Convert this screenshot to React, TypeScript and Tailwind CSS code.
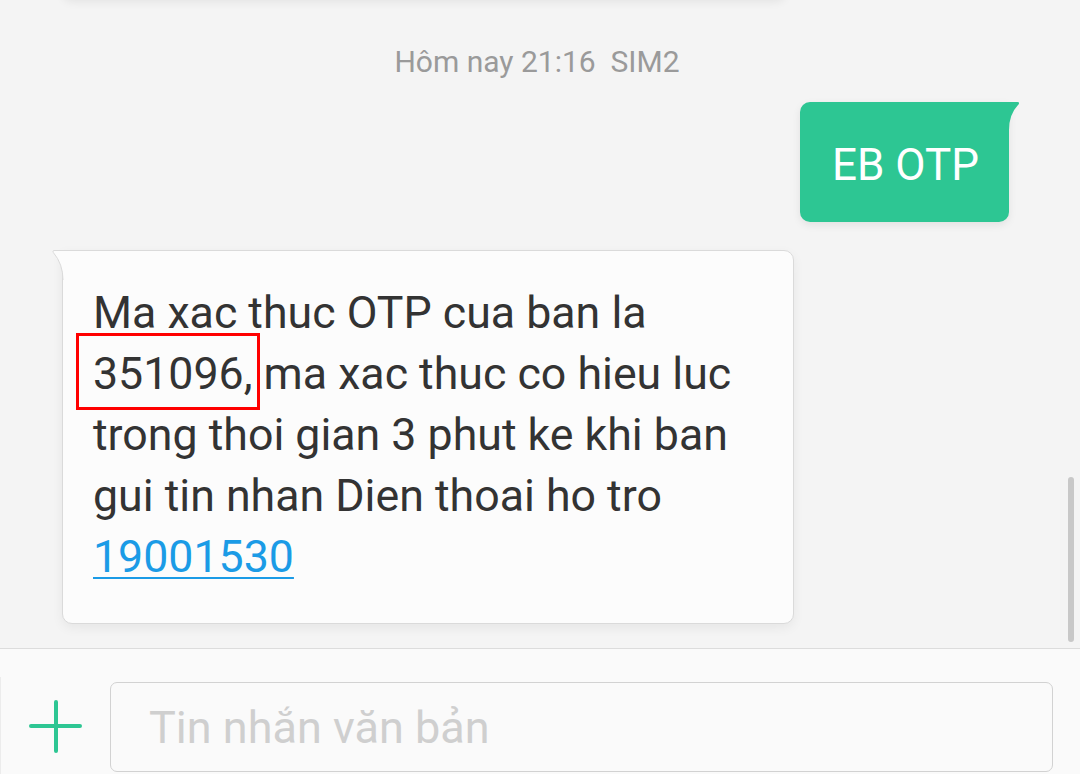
import React from 'react'

const GREEN = '#2dc693'

const lines = [
  'Ma xac thuc OTP cua ban la',
  '351096, ma xac thuc co hieu luc',
  'trong thoi gian 3 phut ke khi ban',
  'gui tin nhan Dien thoai ho tro',
]

function IncomingTail() {
  return (
    <svg className="absolute left-[-11px] top-[-1px]" width="12" height="30" viewBox="0 0 12 30">
      <path d="M12 0 L2 0 Q-0.5 0 1 2.5 Q11 14 11 30 L12 30 Z" fill="#fcfcfc" />
      <path d="M12 0.5 L2 0.5 Q0 0.5 1.4 2.6 Q11 14 11 30" fill="none" stroke="#dadada" strokeWidth="1" />
    </svg>
  )
}

function OutgoingTail() {
  return (
    <svg className="absolute right-[-11px] top-0" width="12" height="28" viewBox="0 0 12 28">
      <path d="M0 0 L9.5 0 Q12 0 10.5 2.5 Q1 12 1 28 L0 28 Z" fill={GREEN} />
    </svg>
  )
}

export default function App() {
  return (
    <div className="w-[1080px] h-[774px] flex flex-col bg-[#f4f4f4] overflow-hidden relative font-['Roboto',sans-serif]">
      {/* chat area */}
      <div className="h-[648px] flex flex-col shrink-0 relative">
        {/* previous message, scrolled mostly off screen */}
        <div className="ml-[62px] w-[724px] h-[60px] -mt-[61px] bg-[#fcfcfc] border border-[#e2e2e2] rounded-[10px] shadow-[0_3px_10px_rgba(0,0,0,0.07)]" />

        <div className="mt-[45px] pr-[6px] text-center text-[30px] leading-[36px] text-[#9a9a9a] whitespace-pre">
          {'Hôm nay 21:16  SIM2'}
        </div>

        <div className="mt-[22px] self-end mr-[71px] relative">
          <div
            className="h-[120px] pl-[32px] pr-[30px] pt-[6px] flex items-center rounded-[10px] rounded-tr-none text-white text-[44px] leading-none shadow-[0_3px_8px_rgba(0,0,0,0.08)]"
            style={{ backgroundColor: GREEN }}
          >
            EB OTP
          </div>
          <OutgoingTail />
        </div>

        <div className="mt-[28px] ml-[62px] w-[732px] relative bg-[#fcfcfc] border border-[#dadada] rounded-[10px] rounded-tl-none pl-[30px] pt-[32px] pb-[35px] shadow-[0_4px_12px_rgba(0,0,0,0.06)]">
          <IncomingTail />
          <div className="text-[44.7px] leading-[61px] text-[#333333]">
            {lines.map((l) => (
              <div key={l} className="whitespace-nowrap">
                {l}
              </div>
            ))}
            <div>
              <span className="text-[#1b9be6] underline decoration-2 underline-offset-[5px]">19001530</span>
            </div>
          </div>
          {/* highlight box */}
          <div className="absolute left-[13px] top-[82px] w-[184px] h-[77px] border-[3px] border-[#ff0000]" />
        </div>

        {/* scrollbar */}
        <div className="absolute right-[6px] top-[477px] w-[6px] h-[165px] rounded-full bg-[#c8c8c8]" />
      </div>

      {/* composer */}
      <div className="flex-1 border-t border-[#dcdcdc] bg-[#fafafa] flex items-start">
        <div className="w-[110px] h-full flex items-start justify-center pt-[49px] border-l border-[#ececec] mt-[28px]">
          <svg width="54" height="54" viewBox="0 0 54 54" className="-mt-[26px]">
            <path d="M27 2 V51 M2 26 H51" stroke={GREEN} strokeWidth="4" strokeLinecap="round" fill="none" />
          </svg>
        </div>
        <div className="mt-[33px] w-[943px] h-[90px] border border-[#d2d2d2] rounded-[7px] bg-[#fafafa] flex items-center pl-[38px]">
          <span className="text-[45px] text-[#cfcfcf] leading-none">Tin nhắn văn bản</span>
        </div>
      </div>
    </div>
  )
}
